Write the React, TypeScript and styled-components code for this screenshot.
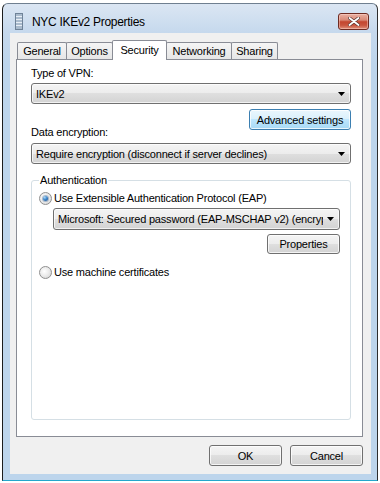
import React from "react";
import styled, { createGlobalStyle } from "styled-components";

const Global = createGlobalStyle`
  html, body { margin: 0; padding: 0; background: #ffffff; }
  body {
    font-family: "Liberation Sans", Arial, sans-serif;
    font-size: 11px;
    letter-spacing: -0.2px;
    color: #000;
  }
  * { box-sizing: border-box; }
`;

const Page = styled.div`
  width: 380px;
  height: 483px;
  padding: 3px 0 0 2px;
  overflow: hidden;
`;

const Window = styled.div`
  width: 376px;
  height: 478px;
  display: flex;
  flex-direction: column;
  border: 1px solid #1c1c1c;
  border-top-color: #6f7f90;
  border-right-color: #2d2d2d;
  border-bottom-color: #24a7cc;
  border-radius: 6px 6px 0 0;
  background: linear-gradient(#dbe6f3 0, #c6d9ed 28px, #bdd5ec 60px, #bdd5ec 100%);
  padding: 0 6px 6px 7px;
`;

const TitleBar = styled.div`
  height: 29px;
  display: flex;
  align-items: flex-start;
  padding-left: 5px;
`;

const TitleIcon = styled.svg`
  width: 8px;
  height: 17px;
  margin-top: 9px;
  margin-right: 9px;
  flex: none;
`;

const TitleText = styled.div`
  margin-top: 11px;
  font-size: 12px;
  line-height: 15px;
  letter-spacing: -0.3px;
  flex: 1;
`;

const CloseButton = styled.div`
  width: 31px;
  height: 17px;
  margin-top: 9px;
  margin-right: 2px;
  border: 1px solid #6e2b22;
  border-radius: 3px;
  background: linear-gradient(#eab0a2 0%, #d98a78 40%, #c4462f 52%, #c9553e 75%, #e0917c 100%);
  display: flex;
  align-items: center;
  justify-content: center;
  box-shadow: inset 0 0 0 1px rgba(255, 220, 210, 0.45);
`;

const Client = styled.div`
  width: 361px;
  height: 441px;
  background: #f0f0f0;
  padding: 7px 8px 8px 6px;
  display: flex;
  flex-direction: column;
`;

const TabStrip = styled.div`
  display: flex;
  align-items: flex-end;
  height: 19px;
  padding-left: 1px;
`;

const Tab = styled.div<{ $w: number; $active?: boolean }>`
  position: relative;
  z-index: ${(p) => (p.$active ? 2 : 1)};
  width: ${(p) => p.$w}px;
  height: ${(p) => (p.$active ? 20 : 17)}px;
  margin-left: -1px;
  margin-bottom: ${(p) => (p.$active ? -1 : 0)}px;
  border: 1px solid #898c95;
  border-bottom: none;
  border-radius: 2px 2px 0 0;
  background: ${(p) => (p.$active ? "#ffffff" : "linear-gradient(#f5f5f5, #e6e6e6)")};
  display: flex;
  justify-content: center;
  padding-top: ${(p) => (p.$active ? 2 : 1)}px;
  line-height: 14px;
  &:first-child { margin-left: 0; }
`;

const Panel = styled.div`
  height: 378px;
  border: 1px solid #898c95;
  background: #ffffff;
  padding: 6px 11px 0 14px;
  display: flex;
  flex-direction: column;
  min-width: 0;
`;

const Label = styled.div`
  line-height: 14px;
  height: 14px;
  white-space: nowrap;
`;

const Combo = styled.div<{ $h?: number; $mt?: number; $ml?: number }>`
  height: ${(p) => p.$h ?? 21}px;
  margin-top: ${(p) => p.$mt ?? 0}px;
  margin-left: ${(p) => p.$ml ?? 0}px;
  min-width: 0;
  border: 1px solid #707070;
  border-radius: 3px;
  background: linear-gradient(#f4f4f4 0%, #ececec 50%, #dfdfdf 50%, #d3d3d3 100%);
  box-shadow: inset 0 0 0 1px rgba(255, 255, 255, 0.7);
  display: flex;
  align-items: center;
  padding: 0 5px 0 4px;
`;

const ComboText = styled.span`
  flex: 1;
  min-width: 0;
  overflow: hidden;
  white-space: nowrap;
  line-height: 14px;
`;

const Arrow = styled.svg`
  width: 7px;
  height: 4px;
  flex: none;
  margin-left: 4px;
`;

const SplitRow = styled.div`
  margin-top: 5px;
  height: 30px;
  display: flex;
  justify-content: space-between;
`;

const BottomLabel = styled(Label)`
  align-self: flex-end;
`;

const Button = styled.div<{ $w: number; $h?: number; $default?: boolean }>`
  width: ${(p) => p.$w}px;
  height: ${(p) => p.$h ?? 21}px;
  flex: none;
  border: 1px solid ${(p) => (p.$default ? "#3c7fb1" : "#707070")};
  border-radius: 3px;
  background: ${(p) =>
    p.$default
      ? "linear-gradient(#eaf6fd 0%, #d9f0fc 50%, #bee6fd 50%, #a7d9f5 100%)"
      : "linear-gradient(#f4f4f4 0%, #ececec 50%, #dfdfdf 50%, #d3d3d3 100%)"};
  box-shadow: inset 0 0 0 1px rgba(255, 255, 255, 0.75);
  display: flex;
  align-items: center;
  justify-content: center;
  line-height: 14px;
  white-space: nowrap;
`;

const Group = styled.fieldset`
  margin: 9px 0 0 0;
  min-width: 0;
  height: 247px;
  border: 1px solid #d5dfe5;
  border-radius: 3px;
  padding: 4px 10px 0 7px;
  display: flex;
  flex-direction: column;
`;

const Legend = styled.legend`
  padding: 0 1px;
  line-height: 14px;
`;

const RadioRow = styled.div<{ $mt?: number }>`
  display: flex;
  align-items: center;
  height: 14px;
  margin-top: ${(p) => p.$mt ?? 0}px;
`;

const Radio = styled.span<{ $checked?: boolean }>`
  width: 13px;
  height: 13px;
  flex: none;
  border-radius: 50%;
  border: 1px solid #8f8f8f;
  background: radial-gradient(circle at 40% 40%, #ffffff 0%, #ececec 45%, #cfcfcf 100%);
  margin-right: 2px;
  display: flex;
  align-items: center;
  justify-content: center;
  &::after {
    content: "";
    display: ${(p) => (p.$checked ? "block" : "none")};
    width: 5px;
    height: 5px;
    border-radius: 50%;
    background: radial-gradient(circle at 35% 30%, #a5d6f8 0%, #3f86c8 45%, #1b4c8a 100%);
    box-shadow: 0 0 0 1px rgba(40, 80, 130, 0.35);
  }
`;

const RightButton = styled.div`
  margin-top: 4px;
  display: flex;
  justify-content: flex-end;
`;

const ButtonRow = styled.div`
  margin-top: 8px;
  display: flex;
  justify-content: flex-end;
  gap: 8px;
`;

const DownArrow = () => (
  <Arrow viewBox="0 0 7 4">
    <polygon points="0,0 7,0 3.5,4" fill="#000" />
  </Arrow>
);

export default function App() {
  return (
    <>
      <Global />
      <Page>
        <Window>
          <TitleBar>
            <TitleIcon viewBox="0 0 8 17">
              <rect x="0.5" y="0.5" width="7" height="16" fill="#a9bbcd" stroke="#6f8398" />
              <line x1="1" y1="3.5" x2="7" y2="3.5" stroke="#e8eef5" />
              <line x1="1" y1="6.5" x2="7" y2="6.5" stroke="#e8eef5" />
              <line x1="1" y1="9.5" x2="7" y2="9.5" stroke="#e8eef5" />
              <line x1="1" y1="12.5" x2="7" y2="12.5" stroke="#e8eef5" />
            </TitleIcon>
            <TitleText>NYC IKEv2 Properties</TitleText>
            <CloseButton>
              <svg width="12" height="9" viewBox="0 0 12 9">
                <path d="M1.5 1 L10.5 8 M10.5 1 L1.5 8" stroke="#5b3530" strokeWidth="3.2" strokeLinecap="round" />
                <path d="M1.5 1 L10.5 8 M10.5 1 L1.5 8" stroke="#ffffff" strokeWidth="1.8" strokeLinecap="round" />
              </svg>
            </CloseButton>
          </TitleBar>
          <Client>
            <TabStrip>
              <Tab $w={50}>General</Tab>
              <Tab $w={47}>Options</Tab>
              <Tab $w={55} $active>Security</Tab>
              <Tab $w={66}>Networking</Tab>
              <Tab $w={47}>Sharing</Tab>
            </TabStrip>
            <Panel>
              <Label>Type of VPN:</Label>
              <Combo $mt={3}>
                <ComboText>IKEv2</ComboText>
                <DownArrow />
              </Combo>
              <SplitRow>
                <BottomLabel>Data encryption:</BottomLabel>
                <Button $w={102} $default>Advanced settings</Button>
              </SplitRow>
              <Combo $mt={4}>
                <ComboText>Require encryption (disconnect if server declines)</ComboText>
                <DownArrow />
              </Combo>
              <Group>
                <Legend>Authentication</Legend>
                <RadioRow>
                  <Radio $checked />
                  <Label>Use Extensible Authentication Protocol (EAP)</Label>
                </RadioRow>
                <Combo $h={22} $mt={3} $ml={14}>
                  <ComboText>Microsoft: Secured password (EAP-MSCHAP v2) (encryption enabled)</ComboText>
                  <DownArrow />
                </Combo>
                <RightButton>
                  <Button $w={73} $h={20}>Properties</Button>
                </RightButton>
                <RadioRow $mt={11}>
                  <Radio />
                  <Label>Use machine certificates</Label>
                </RadioRow>
              </Group>
            </Panel>
            <ButtonRow>
              <Button $w={73}>OK</Button>
              <Button $w={73}>Cancel</Button>
            </ButtonRow>
          </Client>
        </Window>
      </Page>
    </>
  );
}
